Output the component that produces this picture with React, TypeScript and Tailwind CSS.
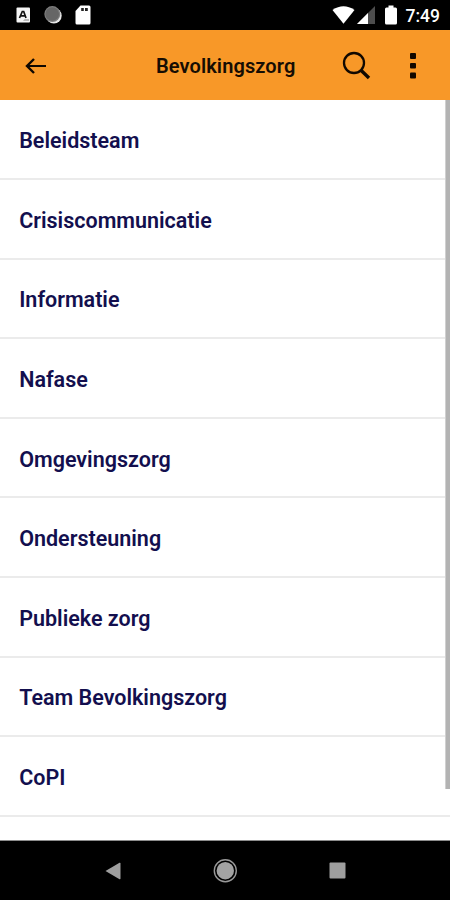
import { useState } from "react";

const items = [
  "Beleidsteam",
  "Crisiscommunicatie",
  "Informatie",
  "Nafase",
  "Omgevingszorg",
  "Ondersteuning",
  "Publieke zorg",
  "Team Bevolkingszorg",
  "CoPI",
];

function StatusBar() {
  return (
    <div className="flex h-[30px] shrink-0 items-center justify-between bg-black pl-4 pr-[10px]">
      {/* notifications */}
      <div className="flex items-center">
        <svg width="14" height="16" viewBox="0 0 14 16">
          <rect x="0.5" y="0.5" width="13.5" height="15" rx="1" fill="#f5f5f5" />
          <path d="M3.5 11L6.3 4.5H7.7L10 11M4.8 8.8H8.8" fill="none" stroke="#111" strokeWidth="1.7" />
          <path d="M7 14L8.5 12H13V14Z" fill="#bbb" />
        </svg>
        <svg width="20" height="20" viewBox="0 0 20 20" className="ml-[13px]">
          <circle cx="10.9" cy="10.7" r="7.8" fill="#e8e8e8" />
          <circle cx="9.3" cy="9.1" r="8" fill="#7d7d7d" />
          <circle cx="9.2" cy="9" r="6.8" fill="#666" />
        </svg>
        <svg width="16" height="20" viewBox="0 0 16 20" className="ml-3">
          <path d="M5.5 0.5H14Q15.5 0.5 15.5 2V18Q15.5 19.5 14 19.5H2Q0.5 19.5 0.5 18V6Z" fill="#fff" />
          <path d="M6.2 3h2.6v3H6.2zM10 3h2.8v3H10z" fill="#222" />
        </svg>
      </div>

      <div className="flex items-center">
        <svg width="23" height="18" viewBox="0 0 24 18" preserveAspectRatio="none">
          <path d="M0.5 4Q12 -3.5 23.5 4L12 17.8Z" fill="#fff" />
        </svg>
        <svg width="18" height="18" viewBox="0 0 18 18" className="ml-[2px]">
          <path d="M0 18L18 0V18Z" fill="#4d4d4d" />
          <path d="M0 18L11 7V18Z" fill="#fff" />
        </svg>
        <svg width="12" height="20" viewBox="0 0 12 20" className="ml-[10px]">
          <path d="M3.5 0.5H8.5V2.5H10.5Q12 2.5 12 4V18Q12 19.5 10.5 19.5H1.5Q0 19.5 0 18V4Q0 2.5 1.5 2.5H3.5Z" fill="#fff" />
        </svg>
        <span className="ml-[9px] mt-[3px] w-[34.5px] whitespace-nowrap text-[17.5px] font-medium leading-none text-white">
          7:49
        </span>
      </div>
    </div>
  );
}

export default function App() {
  const [selected, setSelected] = useState("");

  return (
    <div className="flex h-[900px] w-[450px] flex-col overflow-hidden bg-white font-[Roboto,sans-serif]">
      <StatusBar />

      {/* Header */}
      <header className="flex h-[70.4px] shrink-0 items-center bg-[#f89828] pl-[24px] pt-px">
        <button aria-label="Terug">
          <svg width="22" height="18" viewBox="0 0 22 18" fill="none" stroke="#100800">
            <path d="M3 9H22" strokeWidth="2" />
            <path d="M10 2L3 9L10 16" strokeWidth="2.4" />
          </svg>
        </button>
        <h1 className="ml-[110px] w-[142px] whitespace-nowrap pt-px text-[20px] font-semibold leading-6 tracking-[0.1px] text-[#160d03]">
          Bevolkingszorg
        </h1>
        <button aria-label="Zoeken" className="ml-[44px]">
          <svg width="29" height="30" viewBox="0 0 29 30" fill="none" stroke="#110800">
            <circle cx="12" cy="12" r="10" strokeWidth="2.3" />
            <path d="M18.7 19L27 27" strokeWidth="3.4" />
          </svg>
        </button>
        <button aria-label="Menu" className="ml-[39px]">
          <svg width="6" height="26" viewBox="0 0 6 26" fill="#110800">
            <rect width="6" height="6" rx="1" />
            <rect y="10" width="6" height="5.5" rx="1" />
            <rect y="19.5" width="6" height="6" rx="1" />
          </svg>
        </button>
      </header>

      {/* List */}
      <main className="flex min-h-0 flex-1 border-b border-[#8c8c8c]">
        <ul className="w-[445px] shrink-0">
          {items.map((item) => (
            <li
              key={item}
              onClick={() => setSelected(item)}
              aria-current={selected === item}
              className="flex h-[79.6px] w-[450px] items-center border-b-2 border-[#ebebeb] pl-[19.2px] pt-[4px] text-[21.5px] font-semibold leading-7 text-[#130f4e]"
            >
              {item}
            </li>
          ))}
        </ul>
        <div className="relative h-[689px] w-[5px] shrink-0 border-l border-[#d0d0d0] bg-[#b3b3b3]" />
      </main>

      {/* Navigation bar */}
      <nav className="flex h-[59px] shrink-0 items-center bg-black pl-[105px]">
        <svg width="16" height="18" viewBox="0 0 16 18" fill="#9e9e9e">
          <path d="M0.5 9L14.5 0.8Q15.5 0.5 15.5 1.5V16.5Q15.5 17.5 14.5 17.2Z" />
        </svg>
        <svg width="24" height="24" viewBox="0 0 24 24" className="ml-[92px]">
          <circle cx="12.3" cy="11.7" r="11" fill="none" stroke="#999" strokeWidth="1.4" />
          <circle cx="12.3" cy="11.7" r="8.7" fill="#a3a3a3" />
        </svg>
        <svg width="17" height="17" viewBox="0 0 17 17" className="ml-[92px]">
          <rect x="0.5" y="0.5" width="16" height="16" rx="1" fill="#9e9e9e" />
        </svg>
      </nav>
    </div>
  );
}
